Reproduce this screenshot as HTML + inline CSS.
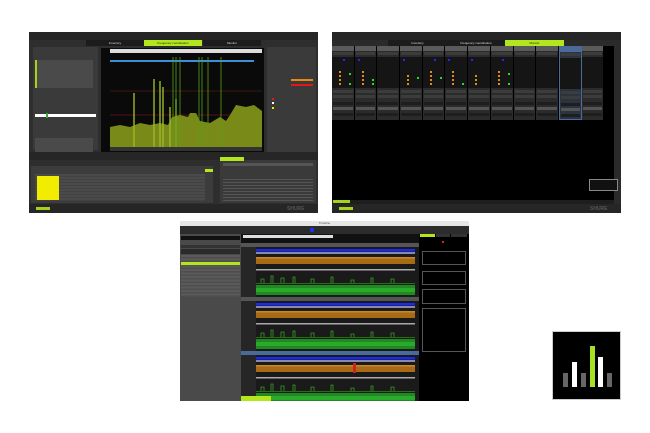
<!DOCTYPE html>
<html><head><meta charset="utf-8"><style>
*{margin:0;padding:0;box-sizing:border-box}
body{width:650px;height:433px;background:#fff;position:relative;overflow:hidden;font-family:"Liberation Sans",sans-serif;font-size:3px;color:#ccc}
.a{position:absolute}
.strip{position:relative;width:22.7px;height:74px;border-right:1px solid #000;background:#2b2b2b}
.strip .h{position:absolute;left:0;top:0;width:100%;height:5px;background:#5a5a5a}
.strip .r{position:absolute;left:1px;right:1px;height:3px;background:#3c3c3c}
.strip .m{position:absolute;left:0;top:11px;width:100%;height:31px;background:#151515}
.strip .o{position:absolute;width:2px;height:2px;background:#e08a1a}
.strip .g{position:absolute;width:2px;height:2px;background:#22dd22}
.strip .b{position:absolute;width:2px;height:2px;background:#1a2aff}
</style></head><body>

<!-- Screenshot 1 -->
<div class="a" style="left:29px;top:32px;width:289px;height:181px;background:#2e2e2e">
 <div class="a" style="left:0;top:0;width:289px;height:8px;background:#262626"></div>
 <div class="a" style="left:57px;top:8px;width:58px;height:6px;background:#1c1c1c;color:#ddd;text-align:center;line-height:6px">Inventory</div>
 <div class="a" style="left:115px;top:8px;width:58px;height:6px;background:#b4e61e;color:#222;text-align:center;line-height:6px">Frequency coordination</div>
 <div class="a" style="left:174px;top:8px;width:58px;height:6px;background:#1c1c1c;color:#ddd;text-align:center;line-height:6px">Monitor</div>
 <!-- left panel -->
 <div class="a" style="left:4px;top:15px;width:65px;height:103px;background:#3a3a3a">
  <div class="a" style="left:2px;top:13px;width:58px;height:28px;background:#4a4a4a;border-left:2px solid #a6d21a"></div>
  <div class="a" style="left:2px;top:67px;width:61px;height:3px;background:#fff"></div>
  <div class="a" style="left:13px;top:66px;width:2px;height:5px;background:#3a3"></div>
  <div class="a" style="left:2px;top:91px;width:58px;height:14px;background:#4a4a4a"></div>
 </div>
 <!-- chart -->
 <div class="a" style="left:72px;top:16px;width:163px;height:104px;background:#0a0a0a">
  <div class="a" style="left:9px;top:1px;width:152px;height:4px;background:#ddd"></div>
  <div class="a" style="left:9px;top:12px;width:144px;height:2px;background:#3b8fd6"></div>
  <svg class="a" style="left:9px;top:9px" width="152" height="90" viewBox="0 0 152 90">
   <line x1="0" y1="34" x2="152" y2="34" stroke="#6a2a10" stroke-width="0.6"/>
   <line x1="0" y1="58" x2="152" y2="58" stroke="#a01818" stroke-width="0.6"/>
   <path d="M0,90 L0,70 L10,68 L20,70 L30,66 L40,68 L50,66 L58,68 L62,60 L70,58 L78,60 L80,56 L86,56 L90,64 L100,66 L110,60 L116,64 L120,58 L126,48 L136,50 L144,48 L152,54 L152,90 Z" fill="#7a8a18"/>
   <g stroke="#9ab82a" stroke-width="1.4">
    <line x1="24" y1="90" x2="24" y2="36"/><line x1="44" y1="90" x2="44" y2="22"/><line x1="50" y1="90" x2="50" y2="24"/>
    <line x1="53" y1="90" x2="53" y2="30"/><line x1="60" y1="90" x2="60" y2="50"/><line x1="66" y1="90" x2="66" y2="42"/>
   </g>
   <g stroke="#5aa018" stroke-width="1" opacity="0.8">
    <line x1="63" y1="0" x2="63" y2="90"/><line x1="66" y1="0" x2="66" y2="90"/><line x1="70" y1="0" x2="70" y2="90"/>
    <line x1="89" y1="0" x2="89" y2="90"/><line x1="92" y1="0" x2="92" y2="90"/><line x1="98" y1="0" x2="98" y2="90"/><line x1="111" y1="0" x2="111" y2="90"/>
   </g>
  </svg>
  <div class="a" style="left:9px;top:99px;width:152px;height:4px;background:#333"></div>
 </div>
 <!-- right panel -->
 <div class="a" style="left:238px;top:15px;width:49px;height:105px;background:#3a3a3a">
  <div class="a" style="left:24px;top:32px;width:22px;height:2px;background:#e88a10"></div>
  <div class="a" style="left:24px;top:37px;width:22px;height:2px;background:#e01818"></div>
  <div class="a" style="left:5px;top:51px;width:2px;height:2px;background:#e01818"></div>
  <div class="a" style="left:5px;top:55px;width:2px;height:2px;background:#fff"></div>
  <div class="a" style="left:5px;top:60px;width:2px;height:2px;background:#e8e800"></div>
 </div>
 <div class="a" style="left:0;top:120px;width:289px;height:8px;background:#262626"></div>
 <!-- bottom table -->
 <div class="a" style="left:2px;top:128px;width:182px;height:43px;background:#3c3c3c">
  <div class="a" style="left:0;top:0;width:182px;height:6px;background:#2e2e2e"></div>
  <div class="a" style="left:174px;top:9px;width:8px;height:3px;background:#b4e61e"></div>
  <div class="a" style="left:4px;top:14px;width:170px;height:27px;background:repeating-linear-gradient(#4a4a4a 0 2px,#424242 2px 3px)"></div>
  <div class="a" style="left:6px;top:16px;width:22px;height:24px;background:#f2ec00"></div>
 </div>
 <div class="a" style="left:191px;top:128px;width:96px;height:43px;background:#3a3a3a">
  <div class="a" style="left:0;top:-3px;width:24px;height:4px;background:#b4e61e"></div>
  <div class="a" style="left:3px;top:3px;width:90px;height:3px;background:#555"></div>
  <div class="a" style="left:3px;top:17px;width:90px;height:24px;background:repeating-linear-gradient(#3a3a3a 0 2px,#555 2px 3px)"></div>
 </div>
 <div class="a" style="left:0;top:172px;width:289px;height:9px;background:#262626">
  <div class="a" style="left:7px;top:3px;width:14px;height:3px;background:#a6d21a"></div>
  <div class="a" style="left:258px;top:2px;width:26px;height:5px;color:#555;font-size:5px;font-weight:bold">SHURE</div>
 </div>
</div>

<!-- Screenshot 2 -->
<div class="a" style="left:332px;top:32px;width:289px;height:181px;background:#000">
 <div class="a" style="left:0;top:0;width:289px;height:8px;background:#262626"></div>
 <div class="a" style="left:0;top:8px;width:289px;height:6px;background:#2a2a2a"></div>
 <div class="a" style="left:56px;top:8px;width:59px;height:6px;background:#1c1c1c;color:#ddd;text-align:center;line-height:6px">Inventory</div>
 <div class="a" style="left:115px;top:8px;width:58px;height:6px;background:#1c1c1c;color:#ddd;text-align:center;line-height:6px">Frequency coordination</div>
 <div class="a" style="left:173px;top:8px;width:59px;height:6px;background:#b4e61e;color:#222;text-align:center;line-height:6px">Monitor</div>
 <div class="a" style="left:0;top:14px;display:flex">
  <div class="strip"><div class="h"></div><div class="r" style="top:6px"></div><div class="m"><div class="b" style="left:11px;top:2px"></div><div class="o" style="left:7px;top:14px"></div><div class="o" style="left:7px;top:18px"></div><div class="o" style="left:7px;top:22px"></div><div class="o" style="left:7px;top:26px"></div><div class="g" style="left:17px;top:16px"></div><div class="g" style="left:17px;top:26px"></div></div><div class="r" style="top:44px"></div><div class="r" style="top:49px"></div><div class="r" style="top:56px;background:#1e1e1e"></div><div class="r" style="top:61px;background:#555"></div><div class="r" style="top:67px;background:#1e1e1e"></div></div>
  <div class="strip"><div class="h"></div><div class="r" style="top:6px"></div><div class="m"><div class="b" style="left:3px;top:2px"></div><div class="o" style="left:7px;top:14px"></div><div class="o" style="left:7px;top:18px"></div><div class="o" style="left:7px;top:22px"></div><div class="o" style="left:7px;top:26px"></div><div class="g" style="left:17px;top:22px"></div><div class="g" style="left:17px;top:26px"></div></div><div class="r" style="top:44px"></div><div class="r" style="top:49px"></div><div class="r" style="top:56px;background:#1e1e1e"></div><div class="r" style="top:61px;background:#555"></div><div class="r" style="top:67px;background:#1e1e1e"></div></div>
  <div class="strip"><div class="h"></div><div class="r" style="top:6px"></div><div class="m"></div><div class="r" style="top:44px"></div><div class="r" style="top:49px"></div><div class="r" style="top:56px;background:#1e1e1e"></div><div class="r" style="top:61px;background:#555"></div><div class="r" style="top:67px;background:#1e1e1e"></div></div>
  <div class="strip"><div class="h"></div><div class="r" style="top:6px"></div><div class="m"><div class="b" style="left:3px;top:2px"></div><div class="o" style="left:7px;top:18px"></div><div class="o" style="left:7px;top:22px"></div><div class="o" style="left:7px;top:26px"></div><div class="g" style="left:17px;top:20px"></div></div><div class="r" style="top:44px"></div><div class="r" style="top:49px"></div><div class="r" style="top:56px;background:#1e1e1e"></div><div class="r" style="top:61px;background:#555"></div><div class="r" style="top:67px;background:#1e1e1e"></div></div>
  <div class="strip"><div class="h"></div><div class="r" style="top:6px"></div><div class="m"><div class="b" style="left:11px;top:2px"></div><div class="o" style="left:7px;top:14px"></div><div class="o" style="left:7px;top:18px"></div><div class="o" style="left:7px;top:22px"></div><div class="o" style="left:7px;top:26px"></div><div class="g" style="left:17px;top:20px"></div></div><div class="r" style="top:44px"></div><div class="r" style="top:49px"></div><div class="r" style="top:56px;background:#1e1e1e"></div><div class="r" style="top:61px;background:#555"></div><div class="r" style="top:67px;background:#1e1e1e"></div></div>
  <div class="strip"><div class="h"></div><div class="r" style="top:6px"></div><div class="m"><div class="b" style="left:3px;top:2px"></div><div class="o" style="left:7px;top:14px"></div><div class="o" style="left:7px;top:18px"></div><div class="o" style="left:7px;top:22px"></div><div class="o" style="left:7px;top:26px"></div><div class="g" style="left:17px;top:26px"></div></div><div class="r" style="top:44px"></div><div class="r" style="top:49px"></div><div class="r" style="top:56px;background:#1e1e1e"></div><div class="r" style="top:61px;background:#555"></div><div class="r" style="top:67px;background:#1e1e1e"></div></div>
  <div class="strip"><div class="h"></div><div class="r" style="top:6px"></div><div class="m"><div class="b" style="left:3px;top:2px"></div><div class="o" style="left:7px;top:18px"></div><div class="o" style="left:7px;top:22px"></div><div class="o" style="left:7px;top:26px"></div></div><div class="r" style="top:44px"></div><div class="r" style="top:49px"></div><div class="r" style="top:56px;background:#1e1e1e"></div><div class="r" style="top:61px;background:#555"></div><div class="r" style="top:67px;background:#1e1e1e"></div></div>
  <div class="strip"><div class="h"></div><div class="r" style="top:6px"></div><div class="m"><div class="b" style="left:11px;top:2px"></div><div class="o" style="left:7px;top:14px"></div><div class="o" style="left:7px;top:18px"></div><div class="o" style="left:7px;top:22px"></div><div class="o" style="left:7px;top:26px"></div><div class="g" style="left:17px;top:16px"></div><div class="g" style="left:17px;top:26px"></div></div><div class="r" style="top:44px"></div><div class="r" style="top:49px"></div><div class="r" style="top:56px;background:#1e1e1e"></div><div class="r" style="top:61px;background:#555"></div><div class="r" style="top:67px;background:#1e1e1e"></div></div>
  <div class="strip"><div class="h"></div><div class="r" style="top:6px"></div><div class="m"></div><div class="r" style="top:44px"></div><div class="r" style="top:49px"></div><div class="r" style="top:56px;background:#1e1e1e"></div><div class="r" style="top:61px;background:#555"></div><div class="r" style="top:67px;background:#1e1e1e"></div></div>
  <div class="strip"><div class="h"></div><div class="r" style="top:6px"></div><div class="m"></div><div class="r" style="top:44px"></div><div class="r" style="top:49px"></div><div class="r" style="top:56px;background:#1e1e1e"></div><div class="r" style="top:61px;background:#555"></div><div class="r" style="top:67px;background:#1e1e1e"></div></div>
  <div class="strip" style="background:#2b3340;border:1px solid #4a6a9a"><div class="h" style="background:#4a6a9a"></div><div class="r" style="top:6px"></div><div class="m"></div><div class="r" style="top:44px"></div><div class="r" style="top:49px"></div><div class="r" style="top:56px;background:#1e1e1e"></div><div class="r" style="top:61px;background:#555"></div><div class="r" style="top:67px;background:#1e1e1e"></div></div>
  <div class="strip"><div class="h"></div><div class="r" style="top:6px"></div><div class="m"></div><div class="r" style="top:44px"></div><div class="r" style="top:49px"></div><div class="r" style="top:56px;background:#1e1e1e"></div><div class="r" style="top:61px;background:#555"></div><div class="r" style="top:67px;background:#1e1e1e"></div></div>
 </div>
 <div class="a" style="left:282px;top:14px;width:7px;height:158px;background:#2a2a2a"></div>
 <div class="a" style="left:257px;top:147px;width:29px;height:12px;border:1px solid #888;background:#111"></div>
 <div class="a" style="left:0;top:168px;width:282px;height:4px;background:#1e1e1e"><div class="a" style="left:1px;top:0;width:17px;height:3px;background:#a6d21a"></div></div>
 <div class="a" style="left:0;top:172px;width:289px;height:9px;background:#262626">
  <div class="a" style="left:7px;top:3px;width:14px;height:3px;background:#a6d21a"></div>
  <div class="a" style="left:258px;top:2px;width:26px;height:5px;color:#555;font-size:5px;font-weight:bold">SHURE</div>
 </div>
</div>

<!-- Screenshot 3 -->
<div class="a" style="left:180px;top:221px;width:289px;height:180px;background:#1a1a1a">
 <div class="a" style="left:0;top:0;width:289px;height:5px;background:#e6e6e6;color:#555;text-align:center;line-height:5px">Timeline</div>
 <div class="a" style="left:0;top:5px;width:289px;height:8px;background:#2c2c2c">
  <div class="a" style="left:130px;top:2px;width:4px;height:4px;background:#2233dd"></div>
 </div>
 <div class="a" style="left:0;top:13px;width:61px;height:167px;background:#4a4a4a">
  <div class="a" style="left:1px;top:2px;width:59px;height:4px;background:#111"></div>
  <div class="a" style="left:1px;top:11px;width:59px;height:3px;background:#333"></div>
  <div class="a" style="left:1px;top:15px;width:59px;height:5px;background:#2a2a2a"></div>
  <div class="a" style="left:1px;top:21px;width:59px;height:42px;background:repeating-linear-gradient(#5a5a5a 0 2px,#4e4e4e 2px 3.5px)"></div>
  <div class="a" style="left:1px;top:28px;width:59px;height:3px;background:#b4e61e"></div>
 </div>
 <div class="a" style="left:61px;top:13px;width:178px;height:10px;background:#111">
  <div class="a" style="left:2px;top:1px;width:90px;height:3px;background:#ddd"></div>
 </div>
 <!-- blocks -->
 <svg class="a" style="left:61px;top:22px" width="178" height="158" viewBox="0 0 178 158">
  <defs>
   <g id="blk">
    <rect x="0" y="0" width="178" height="4" fill="#555"/>
    <rect x="0" y="4" width="15" height="50" fill="#262626"/>
    <rect x="15" y="6" width="159" height="2.5" fill="#1a2aee"/>
    <rect x="15" y="9" width="159" height="2" fill="#8a8aa8"/>
    <rect x="15" y="15" width="159" height="6" fill="#a86a14"/>
    <rect x="15" y="14" width="159" height="1.5" fill="#c88a24"/>
    <rect x="15" y="26" width="159" height="1.5" fill="#aaa"/>
    <rect x="15" y="40" width="159" height="1" fill="#2a6a1a"/>
    <path d="M20,40 v-4 h3 v4 M30,40 v-7 h2 v7 M40,40 v-5 h3 v5 M52,40 v-6 h2 v6 M70,40 v-4 h3 v4 M90,40 v-6 h2 v6 M110,40 v-3 h3 v3 M130,40 v-5 h2 v5 M150,40 v-4 h3 v4" fill="none" stroke="#3a9a2a" stroke-width="0.8"/>
    <rect x="15" y="42" width="159" height="10" fill="#1f8a1f"/>
    <rect x="15" y="45" width="159" height="4" fill="#2aaa2a"/>
   </g>
  </defs>
  <use href="#blk" x="0" y="0"/>
  <use href="#blk" x="0" y="54"/>
  <use href="#blk" x="0" y="108"/>
  <rect x="0" y="108" width="178" height="4" fill="#4a6a9a"/>
  <rect x="112" y="120" width="3" height="10" fill="#cc2222"/>
 </svg>
 <div class="a" style="left:61px;top:175px;width:30px;height:5px;background:#b4e61e"></div>
 <!-- right panel -->
 <div class="a" style="left:239px;top:13px;width:50px;height:167px;background:#000">
  <div class="a" style="left:1px;top:0;width:15px;height:3px;background:#b4e61e"></div>
  <div class="a" style="left:17px;top:0;width:14px;height:3px;background:#333"></div>
  <div class="a" style="left:32px;top:0;width:16px;height:3px;background:#333"></div>
  <div class="a" style="left:23px;top:7px;width:2px;height:2px;background:#d22"></div>
  <div class="a" style="left:3px;top:17px;width:44px;height:14px;border:1px solid #555"></div>
  <div class="a" style="left:3px;top:37px;width:44px;height:14px;border:1px solid #555"></div>
  <div class="a" style="left:3px;top:55px;width:44px;height:15px;border:1px solid #555"></div>
  <div class="a" style="left:3px;top:74px;width:44px;height:44px;border:1px solid #555"></div>
 </div>
</div>

<!-- App icon -->
<div class="a" style="left:552px;top:331px;width:69px;height:69px;background:#000;border:1px solid #ccc">
 <div class="a" style="left:10px;top:41px;width:5px;height:14px;background:#666"></div>
 <div class="a" style="left:19px;top:30px;width:5px;height:25px;background:#fff"></div>
 <div class="a" style="left:28px;top:41px;width:5px;height:14px;background:#666"></div>
 <div class="a" style="left:37px;top:14px;width:5px;height:41px;background:#a6e01e"></div>
 <div class="a" style="left:45px;top:25px;width:5px;height:30px;background:#fff"></div>
 <div class="a" style="left:54px;top:41px;width:5px;height:14px;background:#666"></div>
</div>
</body></html>
